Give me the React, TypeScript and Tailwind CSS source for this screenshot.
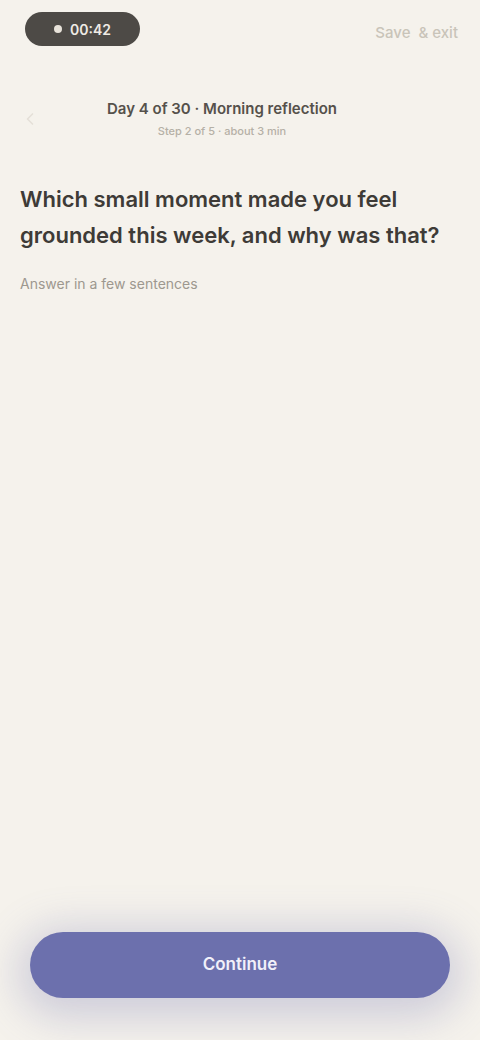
import React from "react";

export default function App() {
  return (
    <div
      className="flex flex-col h-[1040px] w-full bg-[#f5f2ec] text-[#3b3834]"
      style={{ fontFamily: "Inter, 'Noto Sans', sans-serif" }}
    >
      {/* top bar */}
      <div className="flex items-center justify-between pl-[25px] pr-[22px] pt-[12px]">
        <div className="flex h-[34px] w-[115px] items-center justify-center gap-2 rounded-full bg-[#4d4a46]">
          <span className="h-2 w-2 rounded-full bg-[#e8e3da]" />
          <span className="text-[14px] font-semibold text-[#efebe4]">00:42</span>
        </div>
        <div className="flex items-center gap-2 pt-[8px] text-[15px] font-medium text-[#c9c4b9]">
          <span>Save</span>
          <span>&amp; exit</span>
        </div>
      </div>

      {/* header */}
      <div className="flex items-center px-5 pt-[52px]">
        <svg width="20" height="20" viewBox="0 0 24 24" fill="none" stroke="#e4e0d8" strokeWidth="2" strokeLinecap="round" strokeLinejoin="round">
          <path d="M15 18l-6-6 6-6" />
        </svg>
        <div className="flex flex-1 flex-col items-center pr-[56px]">
          <span className="text-[15px] font-semibold text-[#55514b]">Day 4 of 30 · Morning reflection</span>
          <span className="mt-[2px] text-[11px] font-medium text-[#b5b0a6]">Step 2 of 5 · about 3 min</span>
        </div>
      </div>

      {/* prompt */}
      <div className="px-5 pt-[42px]">
        <p className="text-[22px] font-semibold leading-[36px] text-[#3e3b37]">
          Which small moment made you feel grounded this week, and why was that?
        </p>
        <p className="mt-[20px] text-[14px] text-[#9d988f]">Answer in a few sentences</p>
      </div>

      <div className="flex-1" />

      {/* button */}
      <div className="px-[30px] pb-[42px]">
        <button className="flex h-[66px] w-full items-center justify-center rounded-full bg-[#6c70ad] text-[17px] font-semibold text-[#f1f0fa] shadow-[0_8px_40px_12px_rgba(108,112,173,0.28)]">
          Continue
        </button>
      </div>
    </div>
  );
}
